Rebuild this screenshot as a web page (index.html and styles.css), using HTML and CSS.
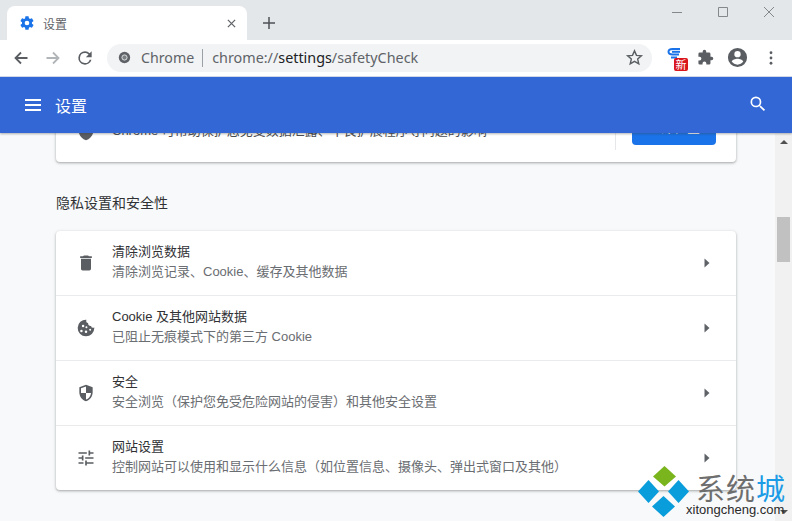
FILE: index.html
```html
<!DOCTYPE html>
<html lang="zh">
<head>
<meta charset="utf-8">
<title>设置</title>
<link rel="stylesheet" href="styles.css">
</head>
<body>
<div class="window">
  <div class="tabstrip">
    <div class="tab">
      <svg class="tab-gear" viewBox="0 0 24 24"><path d="M19.4 13c.04-.32.07-.65.07-1s-.03-.68-.07-1l2.1-1.65a.5.5 0 0 0 .12-.64l-2-3.46a.5.5 0 0 0-.61-.22l-2.49 1a7.3 7.3 0 0 0-1.69-.98l-.38-2.65A.49.49 0 0 0 14 2h-4a.49.49 0 0 0-.49.42l-.38 2.65c-.61.25-1.17.59-1.69.98l-2.49-1a.5.5 0 0 0-.61.22l-2 3.46a.49.49 0 0 0 .12.64L4.57 11c-.04.32-.07.66-.07 1s.03.68.07 1l-2.11 1.65a.5.5 0 0 0-.12.64l2 3.46c.12.22.39.3.61.22l2.49-1c.52.4 1.08.73 1.69.98l.38 2.65c.03.24.24.42.49.42h4c.25 0 .46-.18.49-.42l.38-2.65c.61-.25 1.17-.59 1.69-.98l2.49 1c.23.09.49 0 .61-.22l2-3.46a.5.5 0 0 0-.12-.64L19.4 13zM12 15.5a3.5 3.5 0 1 1 0-7 3.5 3.5 0 0 1 0 7z"/></svg>
      <span class="tab-title">设置</span>
      <svg class="tab-close" viewBox="0 0 10 10"><path d="M1 1l8 8M9 1l-8 8"/></svg>
    </div>
    <svg class="new-tab" viewBox="0 0 12 12"><path d="M6 0v12M0 6h12"/></svg>
    <div class="win-controls">
      <svg class="win-btn" viewBox="0 0 12 12"><path d="M1 6.500h10"/></svg>
      <svg class="win-btn" viewBox="0 0 12 12"><path d="M1.500 1.500h9v9h-9z"/></svg>
      <svg class="win-btn" viewBox="0 0 12 12"><path d="M1 1l10 10M11 1L1 11"/></svg>
    </div>
  </div>
  <div class="toolbar">
    <svg class="nav" viewBox="0 0 16 16"><path d="M14.500 8H2.500M8 2.500L2.500 8 8 13.500"/></svg>
    <svg class="nav nav-off" viewBox="0 0 16 16"><path d="M1.500 8h12M8 2.500L13.500 8 8 13.500"/></svg>
    <svg class="nav-solid" viewBox="0 0 24 24"><path d="M17.650 6.350A7.960 7.960 0 0 0 12 4a8 8 0 1 0 7.730 10h-2.080A6 6 0 1 1 12 6c1.660 0 3.140.69 4.220 1.780L13 11h7V4l-2.350 2.350z"/></svg>
    <div class="omnibox">
      <svg class="chrome-mark" viewBox="0 0 16 16"><circle cx="8" cy="8" r="7"/><circle class="chrome-hole" cx="8" cy="8" r="3.200"/></svg>
      <span class="origin">Chrome</span>
      <span class="sep"></span>
      <span class="url">chrome://<b>settings</b>/safetyCheck</span>
      <svg class="star" viewBox="0 0 24 24"><path d="M12 3.600l2.500 5.700 6.200.6-4.700 4.100 1.400 6.100L12 16.900l-5.400 3.200L8 14l-4.700-4.100 6.200-.6z"/></svg>
    </div>
    <div class="ext-badge">
      <svg class="ext-logo" viewBox="0 0 15 14"><path d="M13 2H5.500C3 2 1.500 3.200 1.500 4.800S3 7.500 5.500 7.500H12"/><path d="M5 4.800h8"/><path d="M4 10.500h6"/></svg>
      <span class="ext-new">新</span>
    </div>
    <svg class="tool-icon puzzle" viewBox="0 0 24 24"><path d="M20.500 11H19V7a2 2 0 0 0-2-2h-4V3.500a2.500 2.500 0 0 0-5 0V5H4a2 2 0 0 0-2 2v3.800h1.500a2.700 2.700 0 0 1 0 5.400H2V20a2 2 0 0 0 2 2h3.800v-1.500a2.700 2.700 0 0 1 5.400 0V22H17a2 2 0 0 0 2-2v-4h1.500a2.500 2.500 0 0 0 0-5z"/></svg>
    <svg class="tool-icon avatar" viewBox="0 0 24 24"><path d="M12 2a10 10 0 1 0 0 20 10 10 0 0 0 0-20zm0 3.200a3.300 3.300 0 1 1 0 6.600 3.300 3.300 0 0 1 0-6.600zm0 14.300a7.300 7.300 0 0 1-6-3.200c.03-2 4-3.100 6-3.100s5.970 1.100 6 3.100a7.300 7.300 0 0 1-6 3.200z"/></svg>
    <svg class="tool-icon menu-dots" viewBox="0 0 4 16"><circle cx="2" cy="2" r="1.600"/><circle cx="2" cy="8" r="1.600"/><circle cx="2" cy="14" r="1.600"/></svg>
  </div>
  <div class="page">
    <header class="appbar">
      <svg class="hamburger" viewBox="0 0 16 12"><path d="M0 1h16M0 6h16M0 11h16"/></svg>
      <span class="app-title">设置</span>
      <svg class="search" viewBox="0 0 24 24"><path d="M15.500 14h-.79l-.28-.27A6.470 6.470 0 0 0 16 9.500 6.500 6.500 0 1 0 9.500 16c1.610 0 3.090-.59 4.230-1.570l.27.28v.79l5 4.990L20.490 19l-4.990-5zm-6 0a4.500 4.500 0 1 1 0-9 4.500 4.500 0 0 1 0 9z"/></svg>
    </header>
    <div class="body-row">
      <main class="content">
        <section class="card card-top">
          <div class="safety-row">
            <svg class="row-icon safety-icon" viewBox="0 0 24 24"><path d="M12 1L3 5v6c0 5.550 3.840 10.740 9 12 5.160-1.260 9-6.450 9-12V5l-9-4z"/></svg>
            <span class="safety-text">Chrome 可帮助保护您免受数据泄露、不良扩展程序等问题的影响</span>
            <span class="safety-sep"></span>
            <span class="safety-btn">立即检查</span>
          </div>
        </section>
        <h2 class="section-title">隐私设置和安全性</h2>
        <section class="card">
          <div class="row">
            <svg class="row-icon" viewBox="0 0 24 24"><path d="M6 19c0 1.100.9 2 2 2h8a2 2 0 0 0 2-2V7H6v12zM19 4h-3.500l-1-1h-5l-1 1H5v2h14V4z"/></svg>
            <div class="row-text"><div class="row-title">清除浏览数据</div><div class="row-sub">清除浏览记录、Cookie、缓存及其他数据</div></div>
            <svg class="chev" viewBox="0 0 6 10"><path d="M0.500 0.500L5.500 5 0.500 9.500z"/></svg>
          </div>
          <div class="row">
            <svg class="row-icon" viewBox="0 0 24 24"><path fill-rule="evenodd" d="M21.900 11.500A3 3 0 0 1 18 9.500a3 3 0 0 1-3.500-3.400A3.200 3.200 0 0 1 12.500 2 10 10 0 1 0 22 12zM8.500 8.200a1.500 1.500 0 1 1 0 3 1.500 1.500 0 0 1 0-3zm-2 5.800a1.500 1.500 0 1 1 0 3 1.500 1.500 0 0 1 0-3zm5.500 1a1.500 1.500 0 1 1 0 3 1.500 1.500 0 0 1 0-3zm.5-5a1.200 1.200 0 1 1 0 2.400 1.200 1.200 0 0 1 0-2.400zm4.500 3a1.200 1.200 0 1 1 0 2.400 1.200 1.200 0 0 1 0-2.400z"/></svg>
            <div class="row-text"><div class="row-title">Cookie 及其他网站数据</div><div class="row-sub">已阻止无痕模式下的第三方 Cookie</div></div>
            <svg class="chev" viewBox="0 0 6 10"><path d="M0.500 0.500L5.500 5 0.500 9.500z"/></svg>
          </div>
          <div class="row">
            <svg class="row-icon" viewBox="0 0 24 24"><path fill-rule="evenodd" d="M12 2L4 5v6.100c0 5 3.400 9.700 8 10.900 4.600-1.200 8-5.900 8-10.900V5l-8-3zm0 2.100V12h6.100c-.5 3.900-3 7-6.100 7.900V12H6V6.300l6-2.200z"/></svg>
            <div class="row-text"><div class="row-title">安全</div><div class="row-sub">安全浏览（保护您免受危险网站的侵害）和其他安全设置</div></div>
            <svg class="chev" viewBox="0 0 6 10"><path d="M0.500 0.500L5.500 5 0.500 9.500z"/></svg>
          </div>
          <div class="row">
            <svg class="row-icon" viewBox="0 0 24 24"><path d="M3 17v2h6v-2H3zM3 5v2h10V5H3zm10 16v-2h8v-2h-8v-2h-2v6h2zM7 9v2H3v2h4v2h2V9H7zm14 4v-2H11v2h10zm-6-4h2V7h4V5h-4V3h-2v6z"/></svg>
            <div class="row-text"><div class="row-title">网站设置</div><div class="row-sub">控制网站可以使用和显示什么信息（如位置信息、摄像头、弹出式窗口及其他）</div></div>
            <svg class="chev" viewBox="0 0 6 10"><path d="M0.500 0.500L5.500 5 0.500 9.500z"/></svg>
          </div>
        </section>
      </main>
      <div class="scrollbar">
        <span class="sb-up"></span>
        <span class="sb-thumb"></span>
        <span class="sb-down"></span>
      </div>
    </div>
  </div>
  <div class="watermark">
    <svg class="wm-logo" viewBox="0 0 52 52"><path class="wm-green" d="M26.500 0L38 10.500l-11.500 10-11.500-10z"/><path class="wm-blue" d="M10.500 14L21 25.500 10.500 37 0 25.500zM40.500 14L51 25.500 40.500 37 30 25.500zM25.500 30L37 40.500 25.500 51 14 40.500z"/></svg>
    <div class="wm-text"><div class="wm-cn"><span>系统</span><span class="wm-accent">城</span></div><div class="wm-en">xitongcheng.com</div></div>
  </div>
</div>
</body>
</html>
```
FILE: styles.css
```css
* { box-sizing: border-box; }
html, body { margin: 0; padding: 0; height: 100%; overflow: hidden; }
body { font-family: "Liberation Sans", "Noto Sans CJK SC", sans-serif; background: #f8f9fa; }
.window { position: relative; width: 792px; height: 521px; display: flex; flex-direction: column; overflow: hidden; }

.tabstrip { height: 40px; background: #e4e7ea; display: flex; align-items: flex-end; padding-left: 7px; flex: none; }
.tab { width: 240px; height: 34px; background: #fff; border-radius: 8px 8px 0 0; display: flex; align-items: center; padding: 0 0 0 12px; }
.tab-gear { width: 16px; height: 16px; fill: #1a73e8; flex: none; }
.tab-title { font-size: 12px; color: #5f6368; margin-left: 8px; flex: 1; }
.tab-close { width: 9px; height: 9px; fill: none; stroke: #5f6368; stroke-width: 1.400; margin-right: 11px; }
.new-tab { width: 12px; height: 12px; fill: none; stroke: #4e5256; stroke-width: 1.500; margin: 0 0 11px 16px; }
.win-controls { margin-left: auto; align-self: flex-start; display: flex; gap: 34px; padding: 6px 17px 0 0; }
.win-btn { width: 12px; height: 12px; fill: none; stroke: #85888b; stroke-width: 1; }

.toolbar { height: 37px; background: #fff; display: flex; align-items: center; padding: 0 0 1px 13px; border-bottom: 1px solid #d5dfee; flex: none; }
.nav { width: 16px; height: 16px; fill: none; stroke: #5a5e62; stroke-width: 1.800; flex: none; }
.nav-off { stroke: #b2b5b8; margin-left: 16px; }
.nav-solid { width: 20px; height: 20px; fill: #5a5e62; margin-left: 14px; flex: none; }
.omnibox { width: 545px; height: 28px; margin-left: 12px; background: #f1f3f4; border-radius: 14px; display: flex; align-items: center; padding-left: 11px; flex: none; }
.chrome-mark { width: 13px; height: 13px; flex: none; fill: #5f6368; }
.chrome-hole { fill: #7d8083; stroke: #f1f3f4; stroke-width: 1; }
.origin { font-family: "Noto Sans", "Liberation Sans", sans-serif; font-size: 14.200px; color: #5f6368; margin-left: 10px; }
.sep { width: 1px; height: 18px; background: #9aa0a6; margin: 0 9px 0 8px; }
.url { font-family: "Noto Sans", "Liberation Sans", sans-serif; font-size: 14.350px; color: #5f6368; }
.url b { font-weight: normal; color: #202124; }
.star { width: 19px; height: 19px; margin-left: auto; margin-right: 8px; fill: none; stroke: #5a5e62; stroke-width: 1.800; }
.ext-badge { position: relative; width: 22px; height: 24px; margin-left: 15px; flex: none; }
.ext-logo { position: absolute; left: 0; top: 1px; width: 15px; height: 14px; fill: none; stroke: #1a73e8; stroke-width: 2; }
.ext-new { position: absolute; left: 7px; top: 12px; width: 14px; height: 13px; background: #d9161c; border-radius: 2px; color: #fff; font-size: 11px; line-height: 13px; text-align: center; font-family: "Noto Sans CJK SC", sans-serif; }
.tool-icon { flex: none; fill: #5a5e62; }
.puzzle { width: 17px; height: 17px; margin-left: 8px; }
.avatar { width: 23px; height: 23px; margin-left: 12px; }
.menu-dots { width: 4px; height: 14px; margin-left: 20px; }

.page { flex: 1; display: flex; flex-direction: column; min-height: 0; }
.appbar { height: 56px; background: #3367d6; display: flex; align-items: center; padding: 0 25px; flex: none; position: relative; z-index: 2; box-shadow: 0 1px 2px rgba(60,64,67,.4); }
.hamburger { width: 16px; height: 12px; fill: none; stroke: #fff; stroke-width: 2; margin-top: -1px; }
.app-title { color: #fff; font-size: 16px; margin-left: 14px; }
.search { width: 20px; height: 20px; fill: #fff; margin-left: auto; margin-right: -1px; margin-top: -3px; }

.body-row { flex: 1; display: flex; min-height: 0; }
.content { flex: 1; padding: 0 39px 0 56px; overflow: hidden; background: #f8f9fa; }
.card { background: #fff; border-radius: 4px; box-shadow: 0 1px 2px rgba(60,64,67,.3), 0 1px 3px 1px rgba(60,64,67,.12); }
.card-top { height: 50px; margin-top: -21px; border-radius: 0 0 4px 4px; }
.safety-row { height: 50px; display: flex; align-items: flex-start; padding: 12px 20px 0 20px; }
.safety-icon { margin-top: -3px; flex: none; }
.safety-text { font-size: 13px; color: #4a4c50; margin-left: 16px; line-height: 18px; flex: 1; margin-top: -2px; white-space: nowrap; }
.safety-sep { width: 1px; height: 26px; background: #e6e7e9; margin: 0 16px 0 0; }
.safety-btn { width: 84px; height: 34px; margin-top: -13px; background: #1a73e8; border-radius: 4px; color: #fff; font-size: 13px; text-align: center; line-height: 34px; }
.section-title { font-size: 14px; font-weight: normal; color: #303134; margin: 31px 0 0; line-height: 20px; height: 38px; }
.row { height: 65px; display: flex; align-items: center; padding: 0 26px 0 20px; border-top: 1px solid #eaebed; }
.row:first-child { border-top: 0; height: 64px; }
.row-icon { width: 20px; height: 20px; fill: #5a5e62; flex: none; }
.row-text { margin-left: 16px; flex: 1; padding-bottom: 2px; }
.row-title { font-size: 13px; line-height: 20px; color: #303134; }
.row-sub { font-size: 13px; line-height: 20px; color: #6a6d71; }
.chev { width: 6px; height: 10px; fill: #5f6368; flex: none; }

.scrollbar { width: 17px; flex: none; background: #f1f1f1; display: flex; flex-direction: column; align-items: center; }
.sb-up { width: 0; height: 0; border-left: 4px solid transparent; border-right: 4px solid transparent; border-bottom: 4px solid #505050; margin-top: 7px; }
.sb-thumb { width: 13px; height: 45px; background: #c1c1c1; margin-top: 73px; }
.sb-down { width: 0; height: 0; border-left: 4px solid transparent; border-right: 4px solid transparent; border-top: 4px solid #505050; margin-top: auto; margin-bottom: 7px; }

.watermark { position: absolute; left: 638px; top: 466px; display: flex; z-index: 3; }
.wm-logo { width: 52px; height: 52px; flex: none; }
.wm-green { fill: #7ab51d; }
.wm-blue { fill: #0a9ddb; }
.wm-text { margin-left: -4px; margin-top: 6px; }
.wm-cn { font-size: 29px; line-height: 30px; color: #6e6e6e; letter-spacing: 1px; font-family: "Noto Sans CJK SC", sans-serif; margin-left: 10px; white-space: nowrap; }
.wm-accent { color: #1c9be6; }
.wm-en { font-size: 13px; line-height: 15px; color: #2a2a2a; white-space: nowrap; }
```
